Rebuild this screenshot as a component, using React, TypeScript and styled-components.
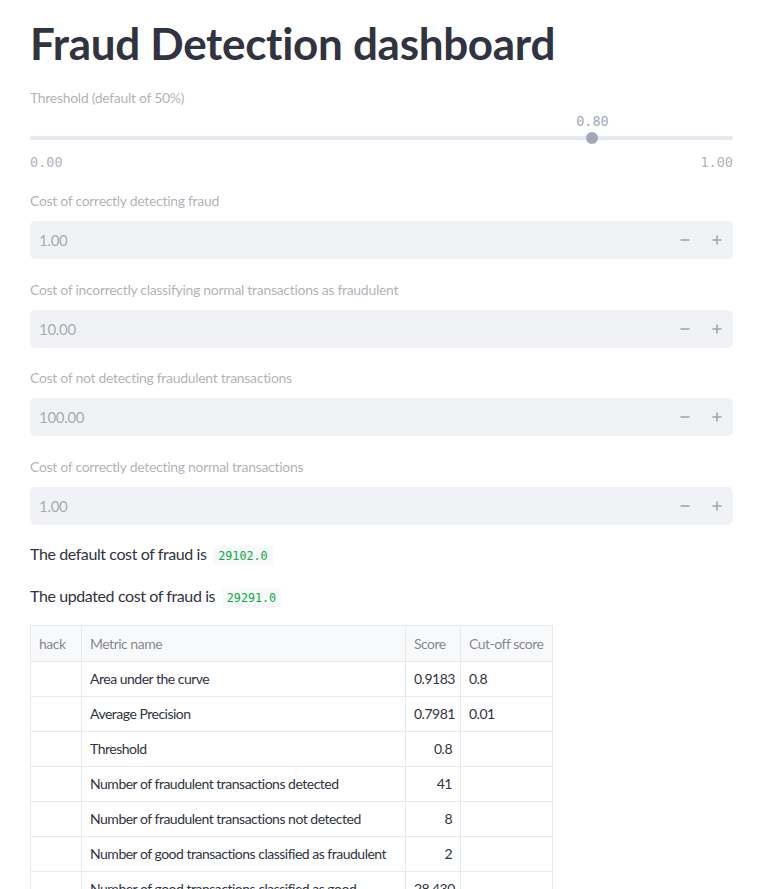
import React from "react";
import styled, { createGlobalStyle } from "styled-components";

const Global = createGlobalStyle`
  html, body { margin: 0; padding: 0; background: #ffffff; }
  body { font-family: "Source Sans Pro", Lato, "Noto Sans", sans-serif; color: #31333f; }
  * { box-sizing: border-box; }
`;

const Page = styled.main`
  padding: 0 31px 0 30px;
  display: flex;
  flex-direction: column;
`;

const Title = styled.h1`
  margin: 0;
  padding: 17px 0 0;
  font-size: 44px;
  line-height: 53px;
  font-weight: 700;
  color: #31333f;
  letter-spacing: -0.3px;
`;

const Label = styled.div`
  font-size: 14px;
  line-height: 21px;
  letter-spacing: -0.3px;
  color: rgba(49, 51, 63, 0.4);
`;

const SliderBlock = styled.section`
  margin-top: 17px;
  display: flex;
  flex-direction: column;
`;

const SliderArea = styled.div`
  position: relative;
  height: 43px;
  margin-top: 2px;
`;

const Mono = `"DejaVu Sans Mono", "Liberation Mono", monospace`;

const Track = styled.div`
  position: absolute;
  left: 0;
  right: 0;
  top: 26px;
  height: 4px;
  border-radius: 2px;
  background: #e6e9ef;
`;

const Thumb = styled.div`
  position: absolute;
  top: 22px;
  width: 12px;
  height: 12px;
  margin-left: -6px;
  border-radius: 50%;
  background: #a3a8b8;
`;

const ThumbValue = styled.div`
  position: absolute;
  top: 1px;
  transform: translateX(-50%);
  font-family: ${Mono};
  font-size: 13.5px;
  line-height: 20px;
  color: #a3a8b8;
`;

const Ticks = styled.div`
  display: flex;
  justify-content: space-between;
  font-family: ${Mono};
  font-size: 13.5px;
  line-height: 20px;
  color: rgba(49, 51, 63, 0.4);
  margin-top: -1px;
`;

const NumberBlock = styled.section`
  margin-top: 18px;
  display: flex;
  flex-direction: column;
  gap: 10px;
  & + & {
    margin-top: 19.5px;
  }
`;

const InputBox = styled.div`
  height: 38px;
  border-radius: 5px;
  background: #f0f2f6;
  display: flex;
  align-items: center;
  padding-left: 9px;
`;

const InputValue = styled.span`
  flex: 1;
  font-size: 15px;
  letter-spacing: -0.3px;
  color: rgba(49, 51, 63, 0.4);
`;

const StepButton = styled.span`
  width: 32px;
  height: 38px;
  display: flex;
  align-items: center;
  justify-content: center;
  color: #a3a6ad;
`;

const Paragraph = styled.p`
  margin: 0;
  font-size: 16px;
  line-height: 24px;
  letter-spacing: -0.4px;
`;

const Paragraphs = styled.div`
  margin-top: 17px;
  display: flex;
  flex-direction: column;
  gap: 16px;
`;

const Code = styled.code`
  font-family: ${Mono};
  font-size: 11.7px;
  letter-spacing: 0;
  color: #09ab3b;
  background: #f8f9fb;
  border-radius: 4px;
  padding: 3px 5px;
  margin-left: 3px;
`;

const Table = styled.table`
  margin-top: 15px;
  border-collapse: collapse;
  border: 1px solid #e6e9ef;
  font-size: 14px;
  letter-spacing: -0.5px;
  width: 522px;
  table-layout: fixed;
`;

const Th = styled.th<{ $w: number }>`
  width: ${(p) => p.$w}px;
  height: 36px;
  text-align: left;
  font-weight: 400;
  white-space: nowrap;
  color: rgba(49, 51, 63, 0.6);
  background: #f8f9fb;
  border: 1px solid #e6e9ef;
  padding: 0 8px;
`;

const Td = styled.td<{ $num?: boolean }>`
  height: 35px;
  border: 1px solid #e6e9ef;
  padding: 0 8px;
  text-align: ${(p) => (p.$num ? "right" : "left")};
  color: #31333f;
  white-space: nowrap;
  overflow: hidden;
`;

const Minus = () => (
  <svg width="10" height="10" viewBox="0 0 10 10">
    <rect x="0.5" y="4.2" width="9" height="1.6" fill="currentColor" />
  </svg>
);
const Plus = () => (
  <svg width="10" height="10" viewBox="0 0 10 10">
    <rect x="0.5" y="4.2" width="9" height="1.6" fill="currentColor" />
    <rect x="4.2" y="0.5" width="1.6" height="9" fill="currentColor" />
  </svg>
);

const inputs = [
  { label: "Cost of correctly detecting fraud", value: "1.00" },
  { label: "Cost of incorrectly classifying normal transactions as fraudulent", value: "10.00" },
  { label: "Cost of not detecting fraudulent transactions", value: "100.00" },
  { label: "Cost of correctly detecting normal transactions", value: "1.00" },
];

const rows: [string, string, string][] = [
  ["Area under the curve", "0.9183", "0.8"],
  ["Average Precision", "0.7981", "0.01"],
  ["Threshold", "0.8", ""],
  ["Number of fraudulent transactions detected", "41", ""],
  ["Number of fraudulent transactions not detected", "8", ""],
  ["Number of good transactions classified as fraudulent", "2", ""],
  ["Number of good transactions classified as good", "28,430", ""],
];

export default function App() {
  const threshold = 0.8;
  return (
    <>
      <Global />
      <Page>
        <Title>Fraud Detection dashboard</Title>
        <SliderBlock>
          <Label>Threshold (default of 50%)</Label>
          <SliderArea>
            <Track />
            <ThumbValue style={{ left: `${threshold * 100}%` }}>0.80</ThumbValue>
            <Thumb style={{ left: `${threshold * 100}%` }} />
          </SliderArea>
          <Ticks>
            <span>0.00</span>
            <span>1.00</span>
          </Ticks>
        </SliderBlock>
        {inputs.map((i) => (
          <NumberBlock key={i.label}>
            <Label>{i.label}</Label>
            <InputBox>
              <InputValue>{i.value}</InputValue>
              <StepButton>
                <Minus />
              </StepButton>
              <StepButton>
                <Plus />
              </StepButton>
            </InputBox>
          </NumberBlock>
        ))}
        <Paragraphs>
          <Paragraph>
            The default cost of fraud is <Code>29102.0</Code>
          </Paragraph>
          <Paragraph>
            The updated cost of fraud is <Code>29291.0</Code>
          </Paragraph>
        </Paragraphs>
        <Table>
          <thead>
            <tr>
              <Th $w={51}>hack</Th>
              <Th $w={324}>Metric name</Th>
              <Th $w={55}>Score</Th>
              <Th $w={92}>Cut-off score</Th>
            </tr>
          </thead>
          <tbody>
            {rows.map((r) => (
              <tr key={r[0]}>
                <Td />
                <Td>{r[0]}</Td>
                <Td $num>{r[1]}</Td>
                <Td>{r[2]}</Td>
              </tr>
            ))}
          </tbody>
        </Table>
      </Page>
    </>
  );
}
